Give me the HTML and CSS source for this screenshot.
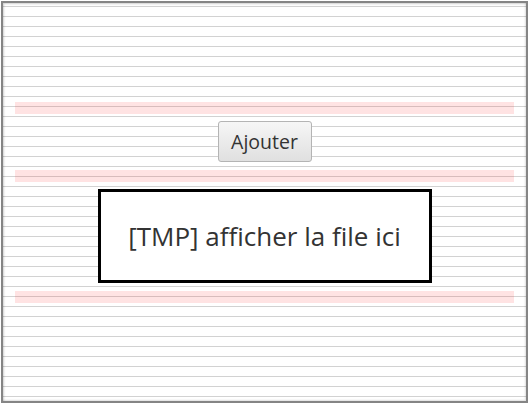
FILE: index.html
```html
<!DOCTYPE html>
<html lang="fr">
<head>
<meta charset="utf-8">
<title>File</title>
<link rel="stylesheet" href="styles.css">
</head>
<body>
<div class="frame">
  <div class="band"></div>
  <div class="actions"><button class="btn" type="button">Ajouter</button></div>
  <div class="band"></div>
  <div class="queue">[TMP] afficher la file ici</div>
  <div class="band"></div>
</div>
</body>
</html>
```
FILE: styles.css
```css
html, body {
  margin: 0;
  padding: 0;
  background: #ffffff;
}
body {
  padding: 1px;
  font-family: "Open Sans", "Noto Sans", sans-serif;
  color: #333333;
}
.frame {
  box-sizing: border-box;
  width: 527px;
  height: 402px;
  border: 2px solid #858585;
  box-shadow: inset 1px 1px 2px rgba(0, 0, 0, 0.18), inset -1px -1px 2px rgba(0, 0, 0, 0.12);
  background-color: #ffffff;
  background-image: linear-gradient(#d2d2d2 1px, transparent 1px);
  background-size: 100% 10px;
  background-position: 0 3px;
  display: flex;
  flex-direction: column;
  justify-content: center;
  align-items: center;
  padding: 0 12px;
}
.band {
  align-self: stretch;
  height: 12px;
  background: rgba(255, 60, 60, 0.14);
}
.actions {
  padding: 7px 0 8px;
}
.btn {
  box-sizing: border-box;
  width: 94px;
  height: 41px;
  font-family: "Open Sans", "Noto Sans", sans-serif;
  font-size: 19.5px;
  color: #333333;
  background: linear-gradient(#f6f6f6, #e0e0e0);
  border: 1px solid #b4b4b4;
  border-radius: 3px;
  padding: 0;
  display: block;
}
.queue {
  box-sizing: border-box;
  width: 334px;
  height: 94px;
  margin: 7px 0 8px;
  border: 3px solid #000000;
  background: #ffffff;
  display: flex;
  align-items: center;
  justify-content: center;
  font-size: 26px;
  color: #333333;
}
```
